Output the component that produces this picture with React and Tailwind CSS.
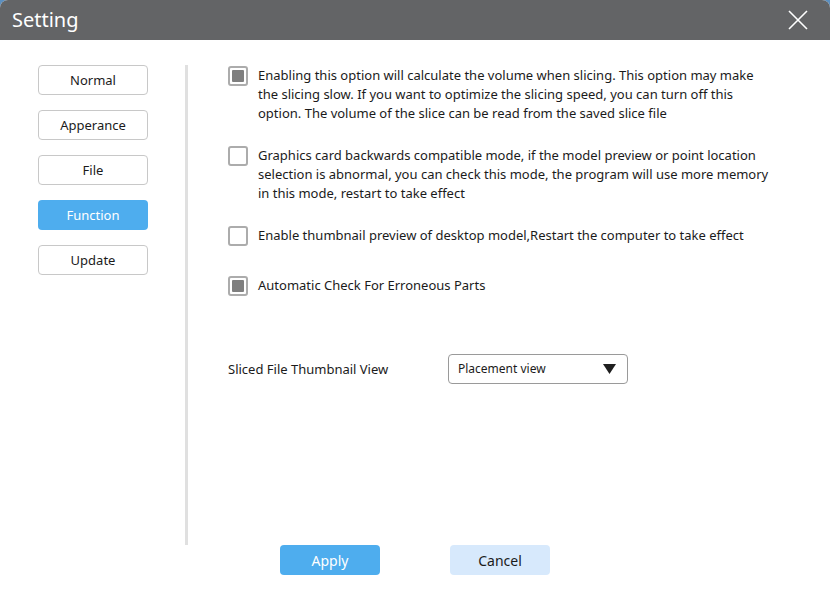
const font = { fontFamily: '"Noto Sans", "Open Sans", sans-serif' }

const tabs = ['Normal', 'Apperance', 'File', 'Function', 'Update']

function Checkbox({ checked }) {
  return (
    <div className="w-[20px] h-[20px] shrink-0 rounded-[3px] border-2 border-[#acacac] bg-white flex items-center justify-center">
      {checked && <div className="w-[12px] h-[12px] rounded-[1px] bg-[#7f7f7f]" />}
    </div>
  )
}

function Option({ checked, lines, className }) {
  return (
    <div className={`flex items-start ${className}`}>
      <div className="pt-[1px]">
        <Checkbox checked={checked} />
      </div>
      <div className="ml-[10px] pt-[1px] text-[13px] leading-[19px] text-[#1b1b1b]">
        {lines.map((l, i) => (
          <div key={i} className="whitespace-nowrap">{l}</div>
        ))}
      </div>
    </div>
  )
}

export default function App() {
  return (
    <div className="w-[830px] h-[600px] bg-[#5b8fc0]" style={font}>
      <div className="w-full h-full bg-white rounded-t-[8px] overflow-hidden flex flex-col">
        {/* title bar */}
        <div className="h-[40px] bg-[#636466] flex items-center justify-between pl-[12px] pr-[22px]">
          <span className="text-white text-[20px] leading-none">Setting</span>
          <svg width="20" height="20" viewBox="0 0 20 20" stroke="white" strokeWidth="1.6" fill="none">
            <path d="M1 1 L19 19 M19 1 L1 19" />
          </svg>
        </div>

        <div className="flex h-[505px]">
          {/* sidebar */}
          <div className="w-[185px] pl-[38px] pt-[25px] flex flex-col gap-[15px]">
            {tabs.map((t) => (
              <div
                key={t}
                className={`w-[110px] h-[30px] pt-[2px] rounded-[4px] flex items-center justify-center text-[13px] ${
                  t === 'Function'
                    ? 'bg-[#4eadee] text-white'
                    : 'border border-[#c8c8c8] text-[#1b1b1b] bg-white'
                }`}
              >
                {t}
              </div>
            ))}
          </div>
          <div className="w-[3px] mt-[25px] h-[480px] bg-[#e0e0e0]" />

          {/* content */}
          <div className="pl-[40px] pt-[25px] flex flex-col">
            <Option
              checked
              lines={[
                'Enabling this option will calculate the volume when slicing. This option may make',
                'the slicing slow. If you want to optimize the slicing speed, you can turn off this',
                'option. The volume of the slice can be read from the saved slice file',
              ]}
            />
            <Option
              className="mt-[22px]"
              lines={[
                'Graphics card backwards compatible mode, if the model preview or point location',
                'selection is abnormal, you can check this mode, the program will use more memory',
                'in this mode, restart to take effect',
              ]}
            />
            <Option
              className="mt-[22px]"
              lines={['Enable thumbnail preview of desktop model,Restart the computer to take effect']}
            />
            <Option className="mt-[29px]" checked lines={['Automatic Check For Erroneous Parts']} />

            <div className="mt-[58px] flex items-center">
              <span className="w-[220px] pt-[1px] text-[13px] text-[#1b1b1b]">Sliced File Thumbnail View</span>
              <div className="w-[180px] h-[30px] border border-[#9a9a9a] rounded-[4px] flex items-center justify-between pl-[9px] pr-[11px]">
                <span className="text-[12px] text-[#1b1b1b]">Placement view</span>
                <svg width="13" height="10" viewBox="0 0 13 10">
                  <path d="M0 0 H13 L6.5 10 Z" fill="#1f1f1f" />
                </svg>
              </div>
            </div>
          </div>
        </div>

        {/* footer buttons */}
        <div className="flex justify-center gap-[70px]">
          <div className="w-[100px] h-[30px] rounded-[4px] bg-[#4eadee] text-white text-[14px] flex items-center justify-center">
            Apply
          </div>
          <div className="w-[100px] h-[30px] rounded-[4px] bg-[#d7e9fc] text-[#1b1b1b] text-[14px] flex items-center justify-center">
            Cancel
          </div>
        </div>
      </div>
    </div>
  )
}
